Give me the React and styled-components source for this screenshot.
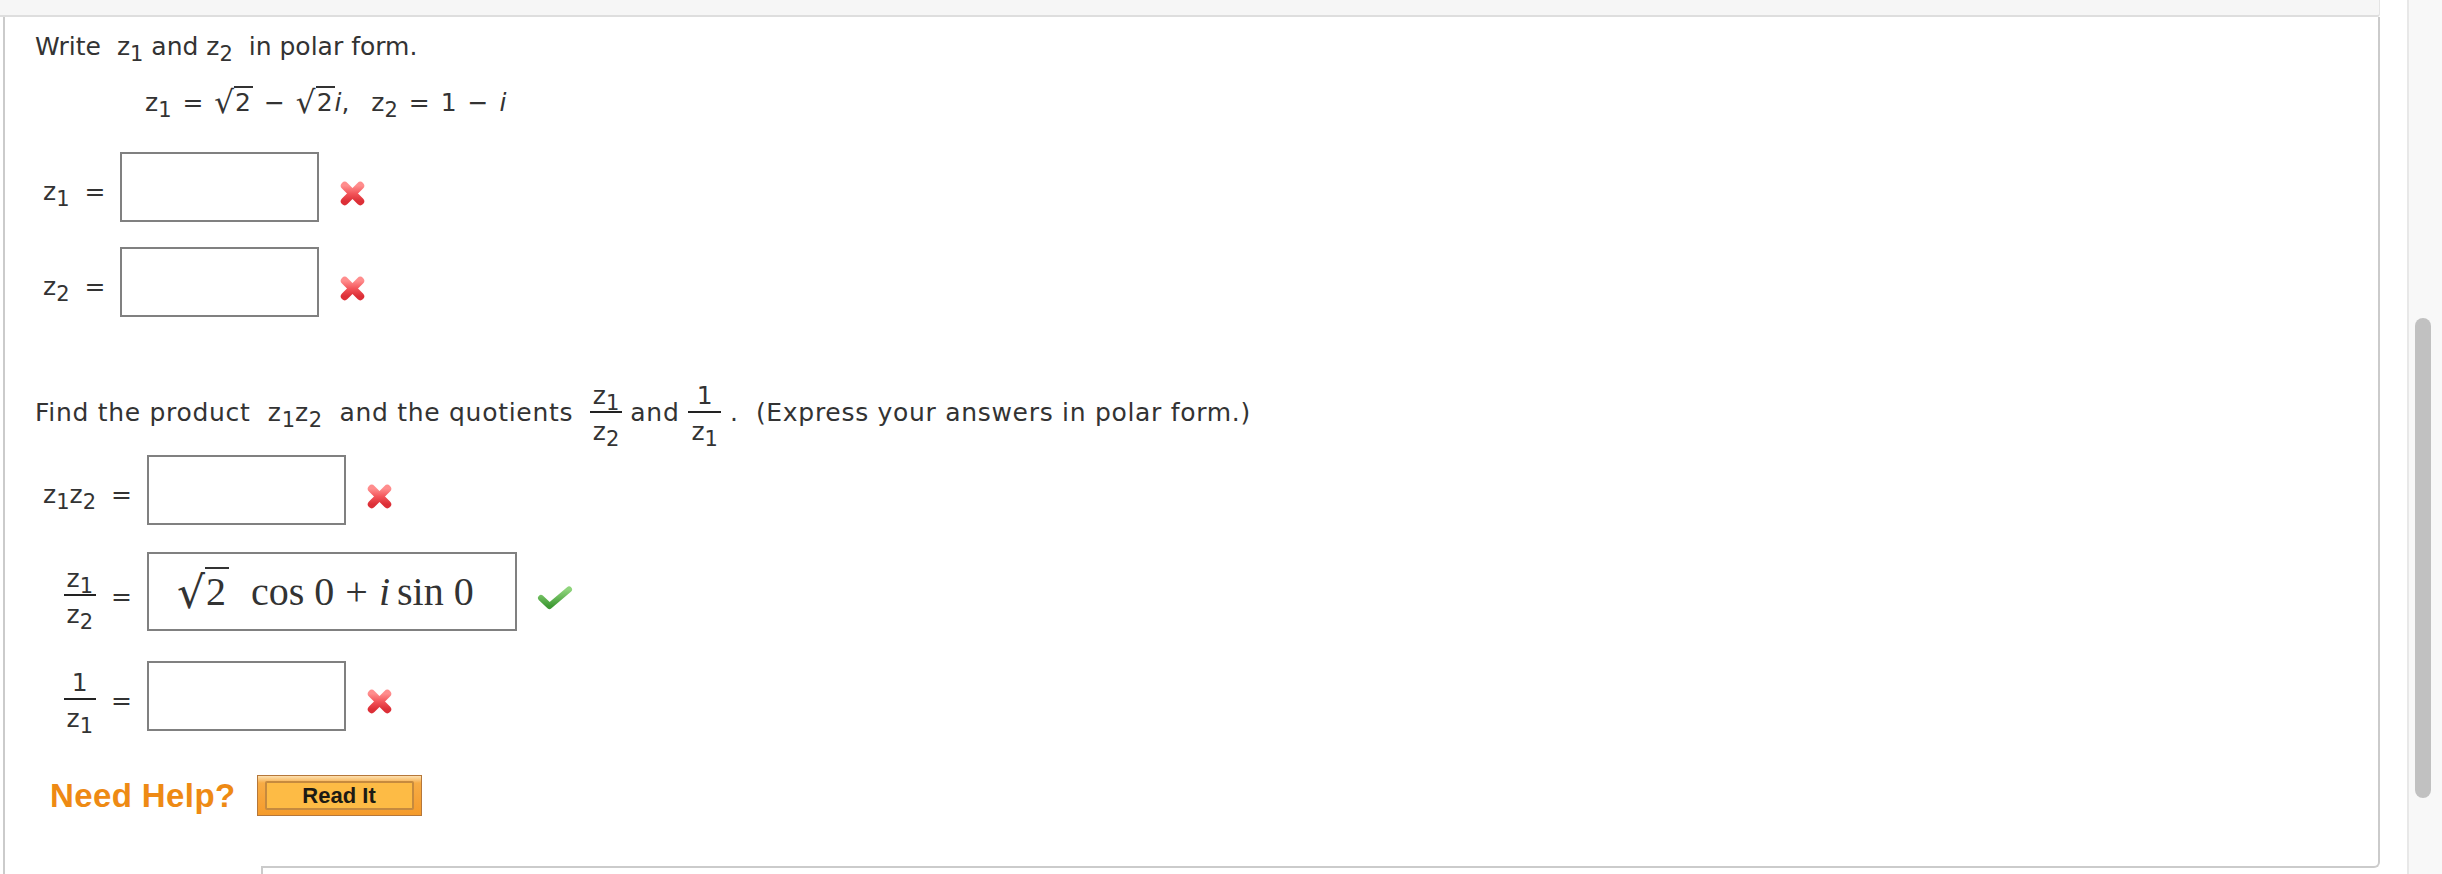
import React from "react";
import styled, { createGlobalStyle } from "styled-components";

const GlobalStyle = createGlobalStyle`
  html, body { margin: 0; padding: 0; background: #fff; }
  body { font-family: "DejaVu Sans", Verdana, sans-serif; color: #333; }
`;

const Viewport = styled.div`
  display: flex;
  width: 2442px;
  height: 874px;
  overflow: hidden;
  background: #fff;
`;

const Main = styled.div`
  width: 2380px;
  flex: none;
  display: flex;
  flex-direction: column;
`;

const TopBand = styled.div`
  flex: none;
  height: 15px;
  background: #f6f6f6;
  border-bottom: 2px solid #dedede;
  border-right: 1px solid #e4e4e4;
  border-bottom-right-radius: 3px;
`;

const Panel = styled.div`
  flex: 1;
  min-height: 0;
  margin-left: 3px;
  border-left: 2px solid #cbcbcb;
  display: flex;
  flex-direction: column;
`;

const Sheet = styled.div`
  flex: 1;
  min-height: 0;
  border-right: 2px solid #cbcbcb;
  padding: 15px 0 0 30px;
`;

const SheetEnd = styled.div`
  flex: none;
  display: flex;
  height: 10px;
`;

const EndSpacer = styled.div`
  flex: none;
  width: 256px;
`;

const EndLip = styled.div`
  flex: 1;
  border-right: 2px solid #cbcbcb;
  border-bottom: 2px solid #cbcbcb;
  border-bottom-right-radius: 6px;
`;

const NextBlock = styled.div`
  flex: none;
  height: 6px;
  margin-left: 256px;
  border-left: 2px solid #cbcbcb;
`;

const Gutter = styled.div`
  flex: 1;
  background: #fff;
`;

const ScrollTrack = styled.div`
  flex: none;
  width: 27px;
  background: #f8f8f8;
  border-left: 2px solid #e8e8e8;
  padding: 318px 0 0 6px;
`;

const ScrollThumb = styled.div`
  width: 16px;
  height: 480px;
  border-radius: 8px;
  background: #c1c1c1;
`;

const Prompt = styled.p`
  margin: ${(p) => p.$mt || 0}px 0 0 ${(p) => p.$indent || 0}px;
  font-size: 25px;
  line-height: 30px;
  color: #333;
  white-space: pre;
  letter-spacing: ${(p) => p.$track || 0}px;
  word-spacing: ${(p) => p.$words || 0}px;
`;

const Sub = styled.sub`
  font-size: 21px;
  line-height: 0;
  vertical-align: -6px;
  letter-spacing: 0;
`;

const Var = styled.span`
  font-style: ${(p) => (p.$italic ? "italic" : "normal")};
`;

const RadicalSign = styled.span`
  font-size: 31px;
  line-height: 0;
  vertical-align: -2px;
`;

const Radicand = styled.span`
  border-top: 2px solid #333;
  padding: 0 2px 0 1px;
`;

const Frac = styled.span`
  display: inline-flex;
  flex-direction: column;
  align-items: center;
  vertical-align: middle;
  letter-spacing: 0;
  margin: 0 ${(p) => p.$gap ?? 8}px;
`;

const Num = styled.span`
  line-height: 29px;
  padding: 0 3px 1px;
`;

const FracBar = styled.span`
  align-self: stretch;
  height: 2px;
  background: #222;
`;

const Den = styled.span`
  line-height: 29px;
  padding: 4px 3px 0;
`;

const AnswerGrid = styled.div`
  display: grid;
  grid-template-columns: auto auto auto;
  align-items: center;
  column-gap: 15px;
  row-gap: ${(p) => p.$rowGap}px;
  margin: ${(p) => p.$mt}px 0 0 8px;
  width: max-content;
  font-size: 25px;
  line-height: 30px;
  color: #333;
`;

const LabelCell = styled.div`
  justify-self: end;
  padding-top: 10px;
  white-space: nowrap;
`;

const EqCell = styled.div`
  padding-top: 10px;
`;

const AnswerCell = styled.div`
  display: flex;
  align-items: center;
  gap: 20px;
`;

const AnswerBox = styled.div`
  box-sizing: border-box;
  width: ${(p) => p.$w || 199}px;
  height: ${(p) => p.$h || 70}px;
  border: 2px solid #808080;
  background: #fff;
  display: flex;
  align-items: center;
  padding-left: 28px;
`;

const MathValue = styled.span`
  font-family: "Liberation Serif", "Times New Roman", serif;
  font-size: 40px;
  line-height: 44px;
  color: #333;
  white-space: pre;
`;

const MathRadical = styled.span`
  font-family: "DejaVu Serif", "Liberation Serif", serif;
  font-size: 44px;
  line-height: 0;
  vertical-align: -3px;
`;

const MathRadicand = styled.span`
  border-top: 2px solid #333;
  padding: 0 3px 0 1px;
`;

const MathSpace = styled.span`
  display: inline-block;
  width: ${(p) => p.$w}px;
`;

const MarkSlot = styled.span`
  display: flex;
  margin-top: 12px;
`;

const HelpRow = styled.div`
  display: flex;
  align-items: center;
  gap: 21px;
  margin: 42px 0 0 15px;
`;

const NeedHelp = styled.span`
  font-family: "Liberation Sans", Arial, sans-serif;
  font-weight: bold;
  font-size: 33px;
  color: #ee8a14;
  letter-spacing: 0.4px;
`;

const ReadItButton = styled.button`
  box-sizing: border-box;
  width: 165px;
  height: 41px;
  padding: 5px 7px;
  margin: 0;
  border: 1px solid #b5773a;
  border-radius: 0;
  background: linear-gradient(#fde0b0 0%, #f7ac45 18%, #f59b2b 100%);
  display: flex;
  cursor: pointer;
`;

const ReadItFace = styled.span`
  flex: 1;
  display: flex;
  align-items: center;
  justify-content: center;
  border: 2px solid #c68a3e;
  border-radius: 2px;
  background: #fdbb45;
  font-family: "Liberation Sans", Arial, sans-serif;
  font-weight: bold;
  font-size: 22px;
  color: #1c1a14;
`;

const WrongMark = ({ id }) => (
  <svg width="27" height="27" viewBox="0 0 26 26">
    <defs>
      <linearGradient id={id} x1="0" y1="0" x2="0" y2="1">
        <stop offset="0" stopColor="#ff8d8d" />
        <stop offset="0.5" stopColor="#f3555a" />
        <stop offset="1" stopColor="#dc2f37" />
      </linearGradient>
    </defs>
    <path
      d="M5.5 5.5 L20.5 20.5 M20.5 5.5 L5.5 20.5"
      stroke={`url(#${id})`}
      strokeWidth="7.5"
      strokeLinecap="round"
      fill="none"
    />
  </svg>
);

const RightMark = () => (
  <svg width="36" height="26" viewBox="0 0 36 26">
    <defs>
      <linearGradient id="checkGrad" x1="0" y1="0" x2="0" y2="1">
        <stop offset="0" stopColor="#8fd47c" />
        <stop offset="1" stopColor="#3f9a34" />
      </linearGradient>
    </defs>
    <path
      d="M4 13 L12.5 21 L32 4.5"
      stroke="url(#checkGrad)"
      strokeWidth="6"
      strokeLinecap="round"
      strokeLinejoin="round"
      fill="none"
    />
  </svg>
);

const Z = ({ n }) => (
  <>
    <Var>z</Var>
    <Sub>{n}</Sub>
  </>
);

export default function App() {
  return (
    <>
      <GlobalStyle />
      <Viewport>
        <Main>
          <TopBand />
          <Panel>
            <Sheet>
              <Prompt>
                {"Write\u00a0 "}
                <Z n="1" />
                {" and "}
                <Z n="2" />
                {"\u00a0 in polar form."}
              </Prompt>
              <Prompt $mt={26} $indent={110} $words={3}>
                <Z n="1" />
                {" = "}
                <RadicalSign>√</RadicalSign>
                <Radicand>2</Radicand>
                {" − "}
                <RadicalSign>√</RadicalSign>
                <Radicand>2</Radicand>
                <Var $italic>i</Var>
                {",  "}
                <Z n="2" />
                {" = 1 − "}
                <Var $italic>i</Var>
              </Prompt>

              <AnswerGrid $mt={34} $rowGap={25}>
                <LabelCell>
                  <Z n="1" />
                </LabelCell>
                <EqCell>=</EqCell>
                <AnswerCell>
                  <AnswerBox />
                  <MarkSlot>
                    <WrongMark id="x1" />
                  </MarkSlot>
                </AnswerCell>

                <LabelCell>
                  <Z n="2" />
                </LabelCell>
                <EqCell>=</EqCell>
                <AnswerCell>
                  <AnswerBox />
                  <MarkSlot>
                    <WrongMark id="x2" />
                  </MarkSlot>
                </AnswerCell>
              </AnswerGrid>

              <Prompt $mt={64} $track={0.7}>
                {"Find the product\u00a0 "}
                <Z n="1" />
                <Z n="2" />
                {"\u00a0 and the quotients "}
                <Frac>
                  <Num>
                    <Z n="1" />
                  </Num>
                  <FracBar />
                  <Den>
                    <Z n="2" />
                  </Den>
                </Frac>
                {"and"}
                <Frac $gap={9}>
                  <Num>1</Num>
                  <FracBar />
                  <Den>
                    <Z n="1" />
                  </Den>
                </Frac>
                {".\u00a0 (Express your answers in polar form.)"}
              </Prompt>

              <AnswerGrid $mt={9} $rowGap={27}>
                <LabelCell>
                  <Z n="1" />
                  <Z n="2" />
                </LabelCell>
                <EqCell>=</EqCell>
                <AnswerCell>
                  <AnswerBox />
                  <MarkSlot>
                    <WrongMark id="x3" />
                  </MarkSlot>
                </AnswerCell>

                <LabelCell>
                  <Frac $gap={0}>
                    <Num>
                      <Z n="1" />
                    </Num>
                    <FracBar />
                    <Den>
                      <Z n="2" />
                    </Den>
                  </Frac>
                </LabelCell>
                <EqCell>=</EqCell>
                <AnswerCell>
                  <AnswerBox $w={370} $h={79}>
                    <MathValue>
                      <MathRadical>√</MathRadical>
                      <MathRadicand>2</MathRadicand>
                      <MathSpace $w={22} />
                      {"cos"}
                      <MathSpace $w={10} />
                      {"0"}
                      <MathSpace $w={11} />
                      {"+"}
                      <MathSpace $w={11} />
                      <Var $italic>i</Var>
                      <MathSpace $w={7} />
                      {"sin"}
                      <MathSpace $w={10} />
                      {"0"}
                    </MathValue>
                  </AnswerBox>
                  <MarkSlot>
                    <RightMark />
                  </MarkSlot>
                </AnswerCell>

                <LabelCell>
                  <Frac $gap={0}>
                    <Num>1</Num>
                    <FracBar />
                    <Den>
                      <Z n="1" />
                    </Den>
                  </Frac>
                </LabelCell>
                <EqCell>=</EqCell>
                <AnswerCell>
                  <AnswerBox />
                  <MarkSlot>
                    <WrongMark id="x4" />
                  </MarkSlot>
                </AnswerCell>
              </AnswerGrid>

              <HelpRow>
                <NeedHelp>Need Help?</NeedHelp>
                <ReadItButton type="button">
                  <ReadItFace>Read It</ReadItFace>
                </ReadItButton>
              </HelpRow>
            </Sheet>
            <SheetEnd>
              <EndSpacer />
              <EndLip />
            </SheetEnd>
            <NextBlock />
          </Panel>
        </Main>
        <Gutter />
        <ScrollTrack>
          <ScrollThumb />
        </ScrollTrack>
      </Viewport>
    </>
  );
}
